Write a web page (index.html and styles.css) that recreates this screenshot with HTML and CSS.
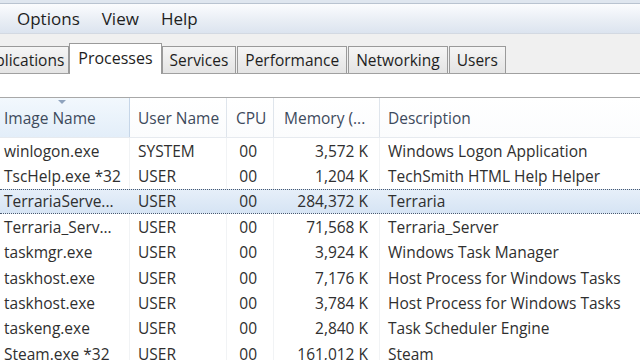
FILE: index.html
```html
<!DOCTYPE html>
<html>
<head>
<meta charset="utf-8">
<link rel="stylesheet" href="styles.css">
</head>
<body>
<div class="window">
  <div class="titleedge"></div>
  <div class="menubar">
    <span class="menu">Options</span>
    <span class="menu">View</span>
    <span class="menu">Help</span>
  </div>
  <div class="tabarea">
    <div class="tabs">
      <div class="tab first">Applications</div>
      <div class="tab active">Processes</div>
      <div class="tab">Services</div>
      <div class="tab">Performance</div>
      <div class="tab">Networking</div>
      <div class="tab">Users</div>
    </div>
  </div>
  <div class="panel">
    <div class="panelgap"></div>
    <div class="list">
      <div class="row head">
        <div class="c c1 sorted"><span class="arrow"></span>Image Name</div>
        <div class="c c2">User Name</div>
        <div class="c c3h">CPU</div>
        <div class="c c4h">Memory (...</div>
        <div class="c c5">Description</div>
      </div>
      <div class="row">
        <div class="c c1">winlogon.exe</div><div class="c c2">SYSTEM</div><div class="c c3">00</div><div class="c c4">3,572 K</div><div class="c c5">Windows Logon Application</div>
      </div>
      <div class="row">
        <div class="c c1">TscHelp.exe *32</div><div class="c c2">USER</div><div class="c c3">00</div><div class="c c4">1,204 K</div><div class="c c5">TechSmith HTML Help Helper</div>
      </div>
      <div class="row selected">
        <div class="c c1">TerrariaServe...</div><div class="c c2">USER</div><div class="c c3">00</div><div class="c c4">284,372 K</div><div class="c c5">Terraria</div>
      </div>
      <div class="row">
        <div class="c c1">Terraria_Serv...</div><div class="c c2">USER</div><div class="c c3">00</div><div class="c c4">71,568 K</div><div class="c c5">Terraria_Server</div>
      </div>
      <div class="row">
        <div class="c c1">taskmgr.exe</div><div class="c c2">USER</div><div class="c c3">00</div><div class="c c4">3,924 K</div><div class="c c5">Windows Task Manager</div>
      </div>
      <div class="row">
        <div class="c c1">taskhost.exe</div><div class="c c2">USER</div><div class="c c3">00</div><div class="c c4">7,176 K</div><div class="c c5">Host Process for Windows Tasks</div>
      </div>
      <div class="row">
        <div class="c c1">taskhost.exe</div><div class="c c2">USER</div><div class="c c3">00</div><div class="c c4">3,784 K</div><div class="c c5">Host Process for Windows Tasks</div>
      </div>
      <div class="row">
        <div class="c c1">taskeng.exe</div><div class="c c2">USER</div><div class="c c3">00</div><div class="c c4">2,840 K</div><div class="c c5">Task Scheduler Engine</div>
      </div>
      <div class="row">
        <div class="c c1">Steam.exe *32</div><div class="c c2">USER</div><div class="c c3">00</div><div class="c c4">161,012 K</div><div class="c c5">Steam</div>
      </div>
    </div>
  </div>
</div>
</body>
</html>
```

FILE: styles.css
```css
html, body {
  margin: 0;
  padding: 0;
}
body {
  width: 640px;
  height: 360px;
  overflow: hidden;
  background: #f0f0f0;
  font-family: "Open Sans", "Noto Sans", sans-serif;
  color: #2f2f2f;
}
.window {
  width: 640px;
  height: 360px;
  overflow: hidden;
}
.titleedge {
  height: 3px;
  background: #dfe6ef;
  border-bottom: 1px solid #b9c3d0;
}
.menubar {
  height: 29px;
  display: flex;
  align-items: center;
  padding-left: 17px;
  gap: 22px;
  background: linear-gradient(#fbfcfe, #e9eef5 55%, #dce4ef);
  border-bottom: 1px solid #d3d9e2;
}
.menu {
  font-size: 17px;
  color: #1e1e1e;
  line-height: 20px;
}
.tabarea {
  height: 39px;
  display: flex;
  align-items: flex-end;
  background: #f0f0f0;
  border-bottom: 1px solid #a0a0a0;
}
.tabs {
  display: flex;
  align-items: flex-end;
  margin-left: -33px;
}
.tab {
  height: 26px;
  line-height: 26px;
  padding: 0 7px 0 7px;
  font-size: 15.5px;
  color: #1e1e1e;
  background: linear-gradient(#f5f5f5, #e4e4e4);
  border: 1px solid #9a9a9a;
  border-bottom: none;
  margin-right: 1px;
}
.tab.first {
  padding-left: 8px;
  padding-right: 4px;
}
.tab.active {
  height: 30px;
  line-height: 28px;
  background: #ffffff;
  padding: 0 8px;
  margin-bottom: -1px;
  margin-left: -1px;
  margin-right: 0;
  font-size: 16px;
}
.panel {
  background: #ffffff;
}
.panelgap {
  height: 23px;
  border-bottom: 1px solid #a8a8a8;
}
.list {
  background: #ffffff;
}
.row {
  display: grid;
  grid-template-columns: 130px 97px 47px 106px 1fr;
  height: 25.4px;
  align-items: center;
  font-size: 15.5px;
  white-space: nowrap;
}
.row .c {
  height: 100%;
  display: flex;
  align-items: center;
  border-right: 1px solid #f1f3f5;
  overflow: hidden;
}
.row .c5 {
  border-right: none;
}
.head {
  height: 39px;
  border-bottom: 1px solid #e6eaef;
  background: linear-gradient(#ffffff, #fbfcfd);
}
.head .c {
  color: #3d4a5c;
  border-right: 1px solid #dfe5ec;
  position: relative;
}
.head .c5 {
  border-right: none;
}
.head .sorted {
  background: linear-gradient(#f2f8fd, #e3eef9);
  border-right-color: #c6d6e8;
}
.arrow {
  position: absolute;
  top: 2px;
  left: 58px;
  width: 0;
  height: 0;
  border-left: 4px solid transparent;
  border-right: 4px solid transparent;
  border-top: 4px solid #8fa3bd;
}
.c1 { padding-left: 4px; }
.c2 { padding-left: 8px; }
.c3h { padding-left: 9px; }
.c3 { justify-content: flex-end; padding-right: 16px; }
.c4h { padding-left: 10px; }
.c4 { justify-content: flex-end; padding-right: 11px; }
.c5 { padding-left: 8px; }
.row.selected {
  background: linear-gradient(#e6eff9, #d6e4f4);
  border-top: 1px dotted #4a5a70;
  border-bottom: 1px dotted #4a5a70;
  height: 23.4px;
}
.row.selected .c {
  border-right-color: transparent;
}
```
